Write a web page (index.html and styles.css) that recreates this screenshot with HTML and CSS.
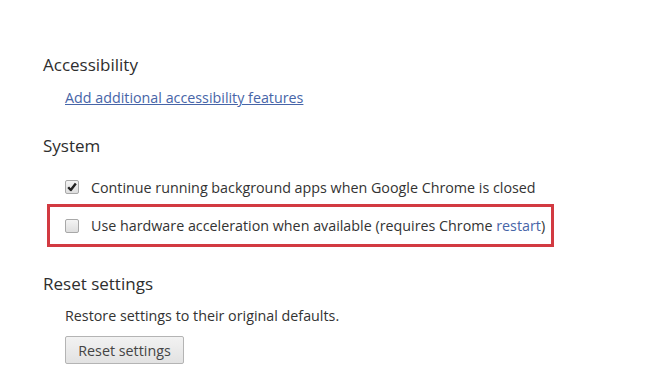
FILE: index.html
```html
<!doctype html>
<html>
<head>
	<meta charset="utf-8" />
	<title>Settings</title>
	<link rel="stylesheet" href="styles.css">
</head>
<body>
	<main class="settings">

		<section class="group">
			<h3 class="group-title">Accessibility</h3>
			<div class="group-body">
				<div class="link-row"><a class="link" href="#">Add additional accessibility features</a></div>
			</div>
		</section>

		<section class="group">
			<h3 class="group-title">System</h3>
			<div class="group-body">
				<label class="check-row">
					<span class="checkbox">
						<svg viewBox="0 0 12 12" width="12" height="12"><path d="M2.2 6.2 L4.8 9 L9.8 2.6" fill="none" stroke="#222" stroke-width="2.4" stroke-linejoin="round"/></svg>
					</span>
					<span>Continue running background apps when Google Chrome is closed</span>
				</label>
				<label class="check-row highlight">
					<span class="checkbox"></span>
					<span>Use hardware acceleration when available (requires Chrome <a class="link plain" href="#">restart</a>)</span>
				</label>
			</div>
		</section>

		<section class="group">
			<h3 class="group-title">Reset settings</h3>
			<div class="group-body">
				<p class="note">Restore settings to their original defaults.</p>
				<button class="button">Reset settings</button>
			</div>
		</section>

	</main>
</body>
</html>
```

FILE: styles.css
```css
*, *::before, *::after {
	box-sizing: border-box;
}

html, body {
	margin: 0;
	padding: 0;
	background: #fff;
}

body {
	font: normal 14.3px "Open Sans", sans-serif;
	color: #333;
}

.settings {
	padding: 53px 0 0 43px;
}

.group {
	display: flow-root;
	margin-bottom: 22px;
}

.group-title {
	margin: 0;
	font-size: 17px;
	font-weight: normal;
	line-height: 24px;
	color: #2e2e2e;
}

.group-body {
	padding: 11px 0 0 22px;
}

.link-row {
	line-height: 20px;
	margin-bottom: 4px;
}

.link {
	color: #4765a8;
	text-decoration: underline;
}

.link.plain {
	text-decoration: none;
}

.check-row {
	display: flex;
	align-items: center;
	gap: 12px;
	height: 26px;
	margin-top: 5px;
}

.highlight {
	margin: 4px 0 3px -18px;
	padding-left: 15px;
	width: 507px;
	height: 43px;
	border: 3px solid #d23a41;
}

.checkbox {
	display: flex;
	align-items: center;
	justify-content: center;
	flex: none;
	width: 14px;
	height: 14px;
	border: 1px solid #a8a8a8;
	border-radius: 2px;
	background: linear-gradient(#f4f4f4, #dedede);
}

.note {
	margin: -1px 0 10px;
	line-height: 20px;
}

.button {
	font: inherit;
	color: #444;
	width: 119px;
	height: 28px;
	border: 1px solid #b4b4b4;
	border-radius: 2px;
	background: linear-gradient(#f2f2f2, #e2e2e2);
}
```
